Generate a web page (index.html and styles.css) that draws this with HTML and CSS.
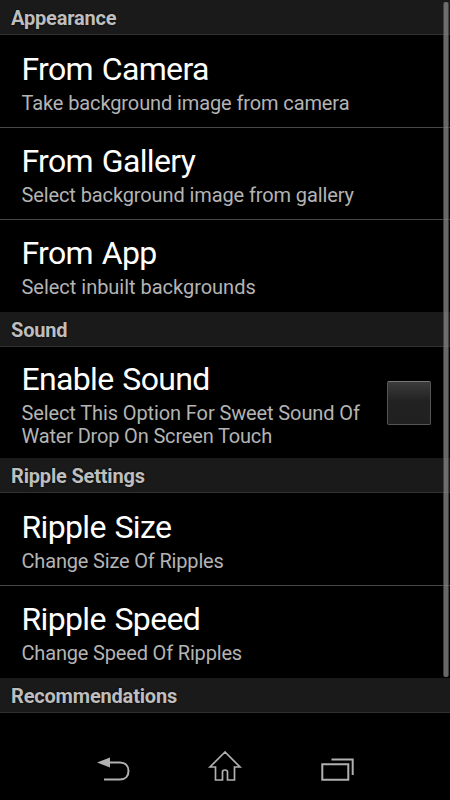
FILE: index.html
```html
<!DOCTYPE html>
<html lang="en">
<head>
<meta charset="utf-8">
<title>Settings</title>
<link rel="stylesheet" href="styles.css">
</head>
<body>
<main class="settings">
  <h2 class="header">Appearance</h2>
  <section class="row lead"><h3>From Camera</h3><p>Take background image from camera</p></section>
  <section class="row"><h3>From Gallery</h3><p>Select background image from gallery</p></section>
  <section class="row last"><h3>From App</h3><p class="wide">Select inbuilt backgrounds</p></section>
  <h2 class="header">Sound</h2>
  <section class="row sound last"><div><h3>Enable Sound</h3><p>Select This Option For Sweet Sound Of<br><span class="tight">Water Drop On Screen Touch</span></p></div><span class="check"></span></section>
  <h2 class="header">Ripple Settings</h2>
  <section class="row lead"><h3>Ripple Size</h3><p class="tight">Change Size Of Ripples</p></section>
  <section class="row last"><h3>Ripple Speed</h3><p class="tight">Change Speed Of Ripples</p></section>
  <h2 class="header">Recommendations</h2>
  <span class="scrollbar"></span>
</main>
<nav class="nav">
  <svg width="450" height="60" viewBox="0 740 450 60" fill="none" stroke="#b0b0b0" stroke-width="2">
    <path d="M109 762.500H120C125.500 762.500 128.500 766 128.500 771C128.500 776 125.500 779.500 120 779.500H104"/>
    <path d="M97 762.500L110 757.500V767.500Z" fill="#b0b0b0" stroke="none"/>
    <path d="M225 752L210 767H215.500V780H222.500V772C222.500 769.300 227.500 769.300 227.500 772V780H234.500V767H240Z" stroke-width="1.700"/>
    <path d="M322.300 764.300H348.300V779.700H322.300ZM331.500 759.500H352.700V775"/>
  </svg>
</nav>
</body>
</html>
```

FILE: styles.css
```css
* { box-sizing: border-box; }
body { margin: 0; width: 450px; height: 800px; background: #000; overflow: hidden; font-family: Roboto, sans-serif; }
h2, h3, p { margin: 0; }
.settings { position: relative; height: 740px; }
.header { height: 35px; padding-left: 11px; background: #1a1a1a; border-bottom: 1px solid #303030; color: #bebebe; font-size: 20px; font-weight: 700; line-height: 36px; letter-spacing: -0.18px; text-shadow: 0 0 2px #000; }
.row { height: 92px; padding: 14px 22px 0 21.5px; border-bottom: 1px solid #484648; }
.row.lead { height: 93px; padding-top: 15px; }
.row.last { border-bottom: 0; }
h3 { color: #fff; font-size: 32px; font-weight: 400; line-height: 38px; letter-spacing: -0.66px; word-spacing: 1.5px; }
p { color: #b4b4b4; font-size: 20px; line-height: 23px; letter-spacing: -0.11px; margin-top: 4px; }
.wide { letter-spacing: -0.02px; }
.tight { letter-spacing: -0.17px; }
.row.sound { height: 111px; padding-top: 13px; display: flex; justify-content: space-between; }
.check { width: 44px; height: 44px; margin: 21px -3px 0 0; border: 1px solid #555; border-top-color: #777; border-radius: 2px; background: linear-gradient(#3c3c3c, #222 45%, #202020); }
.scrollbar { position: absolute; top: 2px; right: 1px; width: 6px; height: 675px; background: rgba(138, 138, 138, 0.75); border: solid rgba(0, 0, 0, 0.4); border-width: 0 1px; border-radius: 2px; }
.nav { height: 60px; }
```
